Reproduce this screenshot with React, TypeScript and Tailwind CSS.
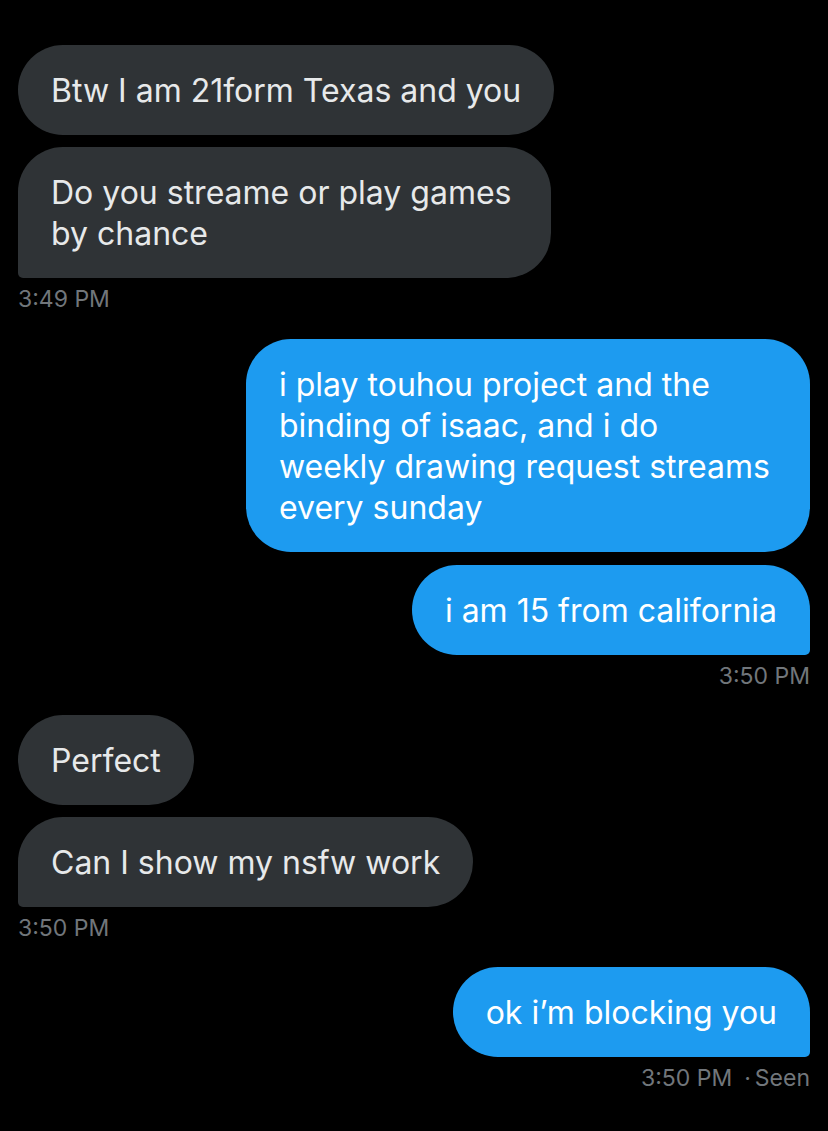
import React from "react";

const font = { fontFamily: "Inter, 'Noto Sans', sans-serif" };

function Gray({ children, last, w }: { children: React.ReactNode; last?: boolean; w?: string }) {
  return (
    <div
      className={`self-start bg-[#2f3336] text-[#e7e9ea] text-[32px] leading-[41px] px-[33px] py-[24.5px] rounded-[45px] ${last ? "rounded-bl-[5px]" : ""} ${w ?? ""}`}
    >
      {children}
    </div>
  );
}

function Blue({ children, last, w }: { children: React.ReactNode; last?: boolean; w?: string }) {
  return (
    <div
      className={`self-end bg-[#1d9bf0] text-white text-[32px] leading-[41px] px-[33px] py-[24.5px] rounded-[45px] ${last ? "rounded-br-[5px]" : ""} ${w ?? ""}`}
    >
      {children}
    </div>
  );
}

export default function App() {
  return (
    <div className="w-[828px] h-[1131px] bg-black overflow-hidden" style={font}>
      <div className="flex flex-col px-[18px] pt-[45px]">
        <Gray>Btw I am 21form Texas and you</Gray>
        <div className="h-[12px]" />
        <Gray last w="w-[533px]">
          Do you streame or play games
          <br />
          by chance
        </Gray>
        <div className="mt-[8px] text-[23px] leading-[26px] text-[#71767b] self-start">3:49 PM</div>

        <div className="h-[27px]" />
        <Blue w="w-[564px]">
          i play touhou project and the
          <br />
          binding of isaac, and i do
          <br />
          weekly drawing request streams
          <br />
          every sunday
        </Blue>
        <div className="h-[13px]" />
        <Blue last>i am 15 from california</Blue>
        <div className="mt-[8px] text-[23px] leading-[26px] text-[#71767b] self-end">3:50 PM</div>

        <div className="h-[26px]" />
        <Gray>Perfect</Gray>
        <div className="h-[12px]" />
        <Gray last>Can I show my nsfw work</Gray>
        <div className="mt-[8px] text-[23px] leading-[26px] text-[#71767b] self-start">3:50 PM</div>

        <div className="h-[26px]" />
        <Blue last>ok i’m blocking you</Blue>
        <div className="mt-[8px] text-[23px] leading-[26px] text-[#71767b] self-end flex">
          <span>3:50 PM</span>
          <span className="ml-[12px]">·</span>
          <span className="ml-[4px]">Seen</span>
        </div>
      </div>
    </div>
  );
}
